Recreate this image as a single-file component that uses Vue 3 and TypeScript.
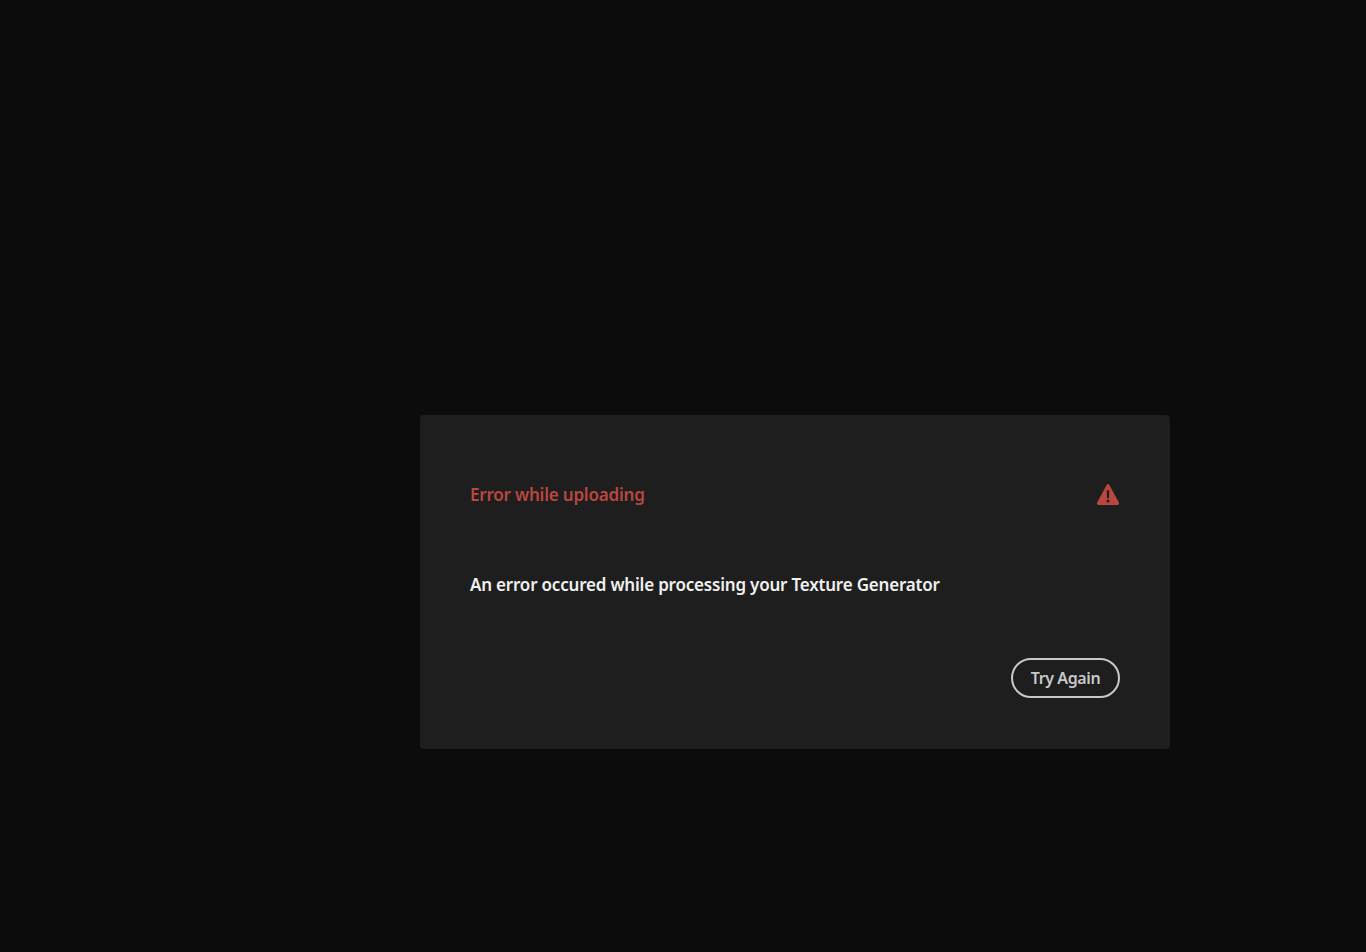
<script setup lang="ts">
const title: string = 'Error while uploading'
const message: string = 'An error occured while processing your Texture Generator'
</script>

<template>
  <main class="page">
    <section class="dialog">
      <header class="head">
        <h2 class="title">{{ title }}</h2>
        <svg class="icon" width="24" height="24" viewBox="0 0 24 24" aria-hidden="true">
          <path fill="#b9463f" d="M10.6 2.9 1.1 20.6a1.6 1.6 0 0 0 1.4 2.4h19a1.6 1.6 0 0 0 1.4-2.4L13.4 2.9a1.6 1.6 0 0 0-2.8 0Z" />
          <path fill="#1e1e1e" d="M10.8 8.2h2.4l-.3 8h-1.8zM12 17.4a1.5 1.5 0 1 1 0 3 1.5 1.5 0 0 1 0-3Z" />
        </svg>
      </header>
      <p class="message">{{ message }}</p>
      <footer class="foot">
        <button class="btn" type="button">Try Again</button>
      </footer>
    </section>
  </main>
</template>

<style>
html, body { margin: 0; background: #0c0c0c; }
</style>

<style scoped>
.page {
  box-sizing: border-box;
  height: 952px;
  padding: 211px 0 0 224px;
  background: #0c0c0c;
  display: flex;
  align-items: center;
  justify-content: center;
  font-family: "Noto Sans", "Open Sans", sans-serif;
}
.dialog {
  box-sizing: border-box;
  width: 750px;
  height: 334px;
  padding: 50px 50px 51px;
  background: #1e1e1e;
  border-radius: 4px;
  display: flex;
  flex-direction: column;
}
.head {
  display: flex;
  align-items: center;
  justify-content: space-between;
  height: 60px;
}
.title {
  margin: 0;
  font-size: 17px;
  letter-spacing: -0.2px;
  font-weight: 600;
  color: #b9463f;
}
.icon {
  display: block;
  margin-bottom: 2px;
}
.message {
  margin: 45px 0 0;
  font-size: 17px;
  letter-spacing: -0.2px;
  line-height: 30px;
  font-weight: 600;
  color: #f0f0f0;
}
.foot {
  margin-top: auto;
  display: flex;
  justify-content: flex-end;
}
.btn {
  box-sizing: border-box;
  width: 109px;
  height: 40px;
  border: 2px solid #c8c8c8;
  border-radius: 20px;
  background: transparent;
  color: #c8c8c8;
  font-family: inherit;
  font-size: 16px;
  letter-spacing: -0.4px;
  font-weight: 600;
  padding: 0;
}
</style>
